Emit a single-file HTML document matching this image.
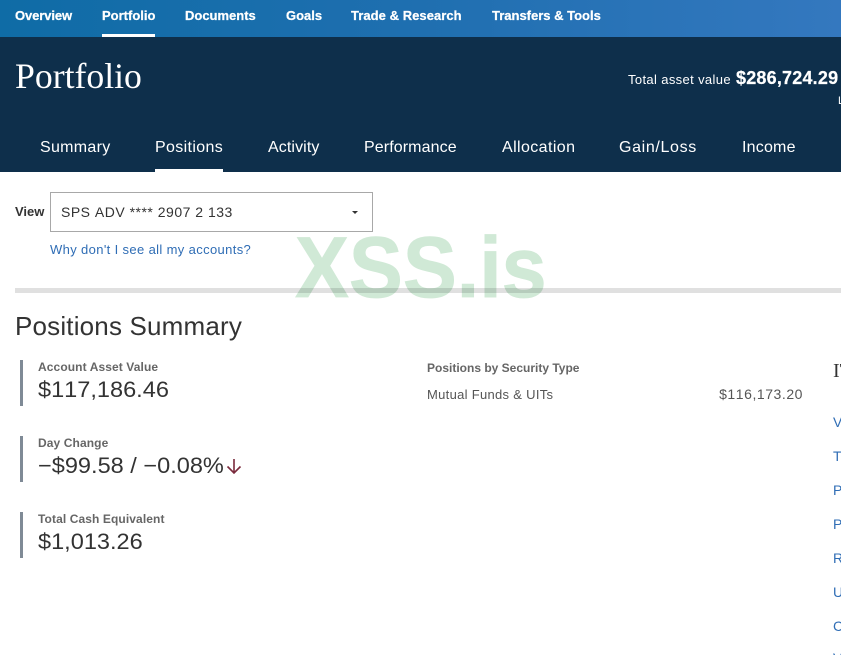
<!DOCTYPE html>
<html lang="en">
<head>
<meta charset="utf-8">
<title>Portfolio Positions</title>
<style>
html,body{margin:0;padding:0;background:#fff}
#p{position:relative;width:841px;height:655px;overflow:hidden;background:#fff;font-family:"Liberation Sans",Arial,sans-serif;color:#333}
#p div,#p a{position:absolute;white-space:nowrap;text-decoration:none}
.top{left:0;top:0;width:841px;height:37px;background:linear-gradient(90deg,#0f6ca6 0%,#1f6fb0 50%,#3478bf 100%)}
.hdr{left:0;top:37px;width:841px;height:135px;background:#0e2f4b}
a.n1{top:8px;font-size:13px;line-height:16px;font-weight:bold;color:#fff;-webkit-text-stroke:.25px #fff}
a.n2{top:138px;font-size:16px;line-height:19px;color:#fff}
.bar{background:#fff}
.lab{font-size:12px;line-height:14px;font-weight:bold;color:#666;left:38px;letter-spacing:.1px}
.val{font-size:22px;line-height:26px;color:#333;left:38px;font-kerning:none;transform:scaleX(1.07);transform-origin:0 0}
.lb{left:20px;width:3px;height:46px;background:#7f8a96}
a.r{left:833px;font-size:14px;line-height:16px;color:#2f6db5}
</style>
</head>
<body>
<div id="p">
  <div class="top"></div>
  <a class="n1" style="left:15px;letter-spacing:-.1px">Overview</a>
  <a class="n1" style="left:102px">Portfolio</a>
  <a class="n1" style="left:185px">Documents</a>
  <a class="n1" style="left:286px">Goals</a>
  <a class="n1" style="left:351px;letter-spacing:.05px">Trade &amp; Research</a>
  <a class="n1" style="left:492px">Transfers &amp; Tools</a>
  <div class="bar" style="left:102px;top:34px;width:53px;height:3px"></div>

  <div class="hdr"></div>
  <div style="left:15px;top:55px;font:35.7px/42px 'Liberation Serif',serif;color:#fff">Portfolio</div>
  <div style="left:628px;top:72px;font-size:13px;line-height:16px;color:#fff;letter-spacing:.36px">Total asset value</div>
  <div style="left:736px;top:68px;font-size:18px;line-height:21px;font-weight:bold;color:#fff;letter-spacing:.2px;-webkit-text-stroke:.2px #fff">$286,724.29</div>
  <div style="left:838px;top:95px;font-size:11px;line-height:13px;color:#fff">L</div>

  <a class="n2" style="left:40px;letter-spacing:.3px">Summary</a>
  <a class="n2" style="left:155px;letter-spacing:.35px">Positions</a>
  <a class="n2" style="left:268px;letter-spacing:.1px">Activity</a>
  <a class="n2" style="left:364px;letter-spacing:.1px">Performance</a>
  <a class="n2" style="left:502px;letter-spacing:.4px">Allocation</a>
  <a class="n2" style="left:619px;letter-spacing:.65px">Gain/Loss</a>
  <a class="n2" style="left:742px;letter-spacing:.2px">Income</a>
  <div class="bar" style="left:155px;top:169px;width:68px;height:3px"></div>

  <div style="left:15px;top:204px;font-size:13px;line-height:15px;font-weight:bold;color:#333">View</div>
  <div style="left:50px;top:192px;width:321px;height:38px;border:1px solid #a8a8a8;background:#fff"></div>
  <div style="left:61px;top:204px;font-size:14px;line-height:16px;color:#333;letter-spacing:.5px;font-kerning:none">SPS ADV **** 2907 2 133</div>
  <div style="left:352px;top:211px;width:0;height:0;border-left:3px solid transparent;border-right:3px solid transparent;border-top:3px solid #333"></div>
  <a style="left:50px;top:242px;font-size:13px;line-height:15px;color:#2f6db5;letter-spacing:.36px">Why don't I see all my accounts?</a>

  <div style="left:15px;top:288px;width:826px;height:5px;background:#e0e0e0"></div>

  <div style="left:15px;top:311px;font-size:26px;line-height:30px;color:#333;letter-spacing:.18px">Positions Summary</div>

  <div class="lb" style="top:360px"></div>
  <div class="lab" style="top:360px">Account Asset Value</div>
  <div class="val" style="top:377px">$117,186.46</div>

  <div class="lb" style="top:436px"></div>
  <div class="lab" style="top:436px">Day Change</div>
  <div class="val" style="top:453px">&minus;$99.58 / &minus;0.08%</div>
  <svg style="position:absolute;left:226px;top:458px" width="16" height="16" viewBox="0 0 16 16"><path d="M8 1V15M1.5 8.5L8 15L14.5 8.5" fill="none" stroke="#7a2a3c" stroke-width="1.6"/></svg>

  <div class="lb" style="top:512px"></div>
  <div class="lab" style="top:512px">Total Cash Equivalent</div>
  <div class="val" style="top:529px">$1,013.26</div>

  <div class="lab" style="left:427px;top:361px;letter-spacing:0">Positions by Security Type</div>
  <div style="left:427px;top:387px;font-size:13px;line-height:15px;color:#555;letter-spacing:.3px">Mutual Funds &amp; UITs</div>
  <div style="right:38px;top:386px;font-size:14px;line-height:16px;color:#555;letter-spacing:.55px;font-kerning:none">$116,173.20</div>

  <div style="left:833px;top:360px;font:20px/23px 'Liberation Serif',serif;color:#333">IT</div>
  <a class="r" style="top:414px">View</a>
  <a class="r" style="top:448px">Trade</a>
  <a class="r" style="top:482px">Purchase</a>
  <a class="r" style="top:516px">Pay</a>
  <a class="r" style="top:550px">Rebalance</a>
  <a class="r" style="top:584px">Update</a>
  <a class="r" style="top:618px">Change</a>
  <a class="r" style="top:650px">View</a>

  <div style="left:295px;top:220px;font-size:86px;line-height:96px;font-weight:bold;color:#d0e9d6;-webkit-text-stroke:.8px #d0e9d6;mix-blend-mode:multiply;transform:scaleX(.94);transform-origin:0 0">XSS.is</div>
</div>
</body>
</html>
